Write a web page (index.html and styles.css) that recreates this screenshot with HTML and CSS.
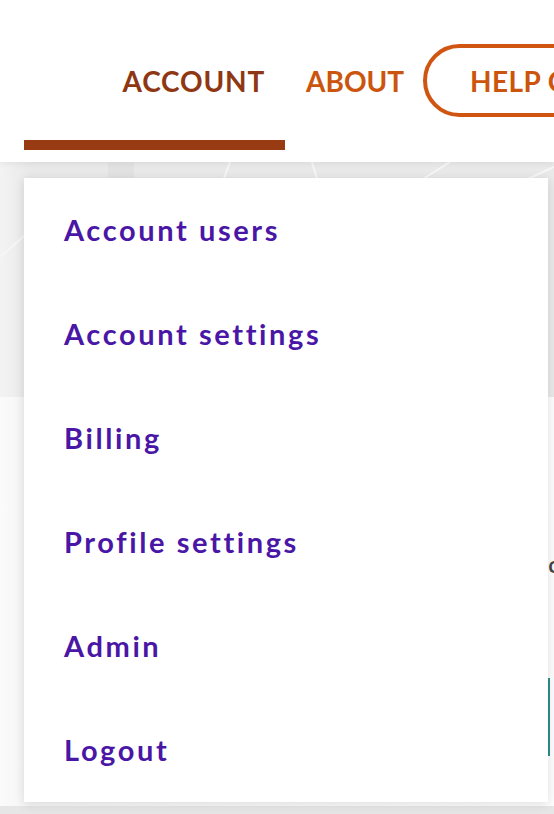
FILE: index.html
```html
<!DOCTYPE html>
<html lang="en">
<head>
<meta charset="utf-8">
<title>Account menu</title>
<link rel="stylesheet" href="styles.css">
</head>
<body>
<header class="topbar">
  <nav class="nav">
    <a class="nav-item nav-item--active" href="#">ACCOUNT</a>
    <a class="nav-item nav-item--about" href="#">ABOUT</a>
    <a class="nav-pill" href="#">HELP CENTER</a>
  </nav>
</header>
<main class="page">
  <section class="hero">
    <svg class="hero-lines" width="554" height="235" viewBox="0 0 554 235" aria-hidden="true">
      <path d="M0 95 L40 60" />
      <path d="M230 0 L222 22" />
      <path d="M312 0 L318 20" />
      <path d="M450 0 L410 25" />
      <path d="M554 5 L510 25" />
      <rect x="108" y="0" width="26" height="22" />
    </svg>
  </section>
  <section class="content">
    <div class="peek-row"><span class="peek-text">co</span></div>
    <div class="peek-btn"></div>
  </section>
  <section class="footer-band"></section>
  <ul class="dropdown">
    <li><a class="dropdown-link" href="#">Account users</a></li>
    <li><a class="dropdown-link" href="#">Account settings</a></li>
    <li><a class="dropdown-link" href="#">Billing</a></li>
    <li><a class="dropdown-link" href="#">Profile settings</a></li>
    <li><a class="dropdown-link" href="#">Admin</a></li>
    <li><a class="dropdown-link" href="#">Logout</a></li>
  </ul>
</main>
</body>
</html>
```

FILE: styles.css
```css
* { box-sizing: border-box; }

html, body {
  margin: 0;
  padding: 0;
  width: 554px;
  overflow: hidden;
}

body {
  font-family: Lato, "Open Sans", sans-serif;
  background: #f7f7f7;
  position: relative;
}

a { text-decoration: none; }

.topbar {
  position: relative;
  z-index: 2;
  height: 162px;
  background: #ffffff;
  box-shadow: 0 2px 6px rgba(0, 0, 0, 0.06);
  padding-left: 24px;
}

.nav {
  display: flex;
  align-items: flex-start;
  white-space: nowrap;
}

.nav-item {
  display: block;
  flex-shrink: 0;
  font-size: 28px;
  font-weight: 700;
  line-height: 28px;
  padding-top: 67px;
}

.nav-item--active {
  width: 261px;
  height: 150px;
  text-align: right;
  padding-right: 20px;
  letter-spacing: 0.8px;
  color: #8e3712;
  border-bottom: 10px solid #983a12;
}

.nav-item--about {
  color: #cc550e;
  letter-spacing: 0;
  padding-left: 21px;
  padding-right: 19px;
}

.nav-pill {
  display: flex;
  flex-shrink: 0;
  align-items: center;
  margin-top: 44px;
  height: 73px;
  padding: 0 30px 0 43px;
  border: 4px solid #cf5510;
  border-radius: 37px;
  color: #cc550e;
  font-size: 28px;
  font-weight: 700;
  letter-spacing: 0.4px;
}

.page {
  display: flex;
  flex-direction: column;
}

.hero {
  height: 235px;
  background: linear-gradient(90deg, #f3f3f3 0, #e9e9e9 30px, #e9e9e9 100%);
}

.hero-lines {
  display: block;
}

.hero-lines path {
  stroke: #f6f6f6;
  stroke-width: 2;
  fill: none;
}

.hero-lines rect {
  fill: #e2e2e2;
}

.content {
  height: 409px;
  background: linear-gradient(90deg, #fbfbfb 0, #f6f6f6 24px, #fdfdfd 100%);
  display: flex;
  flex-direction: column;
  align-items: flex-end;
}

.peek-row {
  margin-top: 152px;
  width: 10px;
  margin-right: -4px;
  font-family: "Open Sans", sans-serif;
  font-size: 22px;
  font-weight: 600;
  color: #444444;
  line-height: 30px;
}

.peek-btn {
  margin-top: 99px;
  width: 10px;
  height: 78px;
  margin-right: -4px;
  border-left: 2px solid #2a8f8a;
}

.footer-band {
  height: 20px;
  background: #e6e6e6;
}

.dropdown {
  position: absolute;
  z-index: 3;
  top: 178px;
  left: 24px;
  width: 524px;
  margin: 0;
  padding: 0;
  list-style: none;
  background: #ffffff;
  box-shadow: 0 2px 10px rgba(0, 0, 0, 0.12);
}

.dropdown-link {
  display: block;
  height: 104px;
  line-height: 104px;
  padding-left: 40px;
  font-size: 29px;
  font-weight: 700;
  letter-spacing: 2.6px;
  color: #4a16a6;
}
```
